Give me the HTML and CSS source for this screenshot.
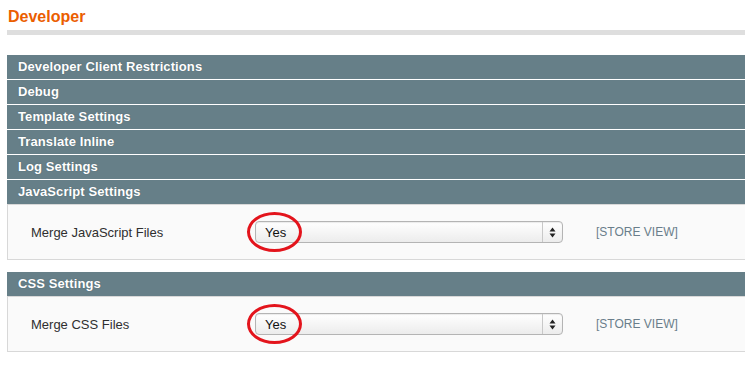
FILE: index.html
```html
<!DOCTYPE html>
<html>
<head>
<meta charset="utf-8">
<link rel="stylesheet" href="styles.css">
</head>
<body>
<div class="page">
  <h1 class="title">Developer</h1>
  <div class="rule"></div>
  <div class="sections">
    <div class="head">Developer Client Restrictions</div>
    <div class="head">Debug</div>
    <div class="head">Template Settings</div>
    <div class="head">Translate Inline</div>
    <div class="head">Log Settings</div>
    <div class="head last">JavaScript Settings</div>
    <div class="panel">
      <div class="label">Merge JavaScript Files</div>
      <div class="select">
        <span class="value">Yes</span>
        <span class="arrows"><svg width="7" height="11" viewBox="0 0 7 11"><path d="M3.5 0.5 L6.5 4.5 L0.5 4.5 Z M3.5 10.5 L6.5 6.5 L0.5 6.5 Z" fill="#222"/></svg></span>
        <span class="circle"></span>
      </div>
      <div class="scope">[STORE VIEW]</div>
    </div>
  </div>
  <div class="sections second">
    <div class="head last">CSS Settings</div>
    <div class="panel">
      <div class="label">Merge CSS Files</div>
      <div class="select">
        <span class="value">Yes</span>
        <span class="arrows"><svg width="7" height="11" viewBox="0 0 7 11"><path d="M3.5 0.5 L6.5 4.5 L0.5 4.5 Z M3.5 10.5 L6.5 6.5 L0.5 6.5 Z" fill="#222"/></svg></span>
        <span class="circle"></span>
      </div>
      <div class="scope">[STORE VIEW]</div>
    </div>
  </div>
</div>
</body>
</html>
```
FILE: styles.css
```css
html, body {
  margin: 0;
  padding: 0;
  background: #fff;
  overflow: hidden;
}
.page {
  width: 760px;
  padding-left: 7px;
  font-family: "Liberation Sans", Arial, sans-serif;
}
.title {
  margin: 0;
  padding: 7px 0 0 1px;
  height: 23px;
  font-size: 16px;
  line-height: 20px;
  font-weight: bold;
  color: #eb5e00;
}
.rule {
  height: 5px;
  background: #dedede;
  margin-bottom: 20px;
}
.head {
  height: 24px;
  line-height: 24px;
  background: #667f88;
  color: #fff;
  font-size: 13px;
  font-weight: bold;
  padding-left: 11px;
  border-bottom: 1px solid #fff;
  text-shadow: 0 0 1px rgba(60, 80, 90, 0.7);
  letter-spacing: 0.1px;
}
.head.last {
  border-bottom: none;
}
.panel {
  height: 54px;
  background: #fafafa;
  border: 1px solid #d8d8d8;
  display: flex;
  align-items: center;
}
.sections.second {
  margin-top: 12px;
}
.label {
  width: 224px;
  padding-left: 23px;
  font-size: 13px;
  color: #2f2f2f;
}
.select {
  position: relative;
  width: 306px;
  height: 20px;
  border: 1px solid #b4b4b4;
  border-radius: 4px;
  background: linear-gradient(#ffffff, #ececec);
  box-shadow: inset 0 1px 1px rgba(0,0,0,0.08);
  display: flex;
  align-items: center;
}
.value {
  flex: 1;
  padding-left: 9px;
  font-size: 13px;
  color: #111;
}
.arrows {
  width: 19px;
  height: 20px;
  border-left: 1px solid #c8c8c8;
  display: flex;
  align-items: center;
  justify-content: center;
}
.circle {
  position: absolute;
  left: -9px;
  top: -10px;
  width: 49px;
  height: 34px;
  border: 3.5px solid #e3141c;
  border-radius: 50%;
}
.scope {
  margin-left: 33px;
  font-size: 12px;
  color: #6a7e8b;
}
```
